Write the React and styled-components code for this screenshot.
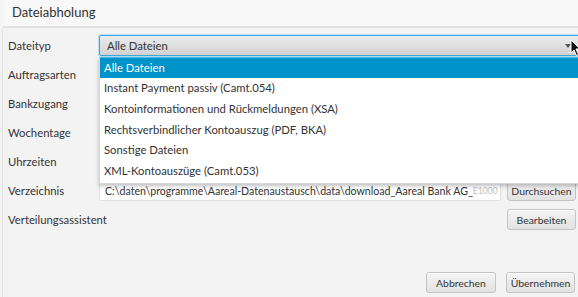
import React from "react";
import styled, { createGlobalStyle } from "styled-components";

const Global = createGlobalStyle`
  html, body { margin: 0; padding: 0; background: #f3f3f3; }
  body { font-family: Lato, "Open Sans", sans-serif; font-size: 11.3px; color: #333; }
  * { box-sizing: border-box; }
`;

const Page = styled.div`
  width: 578px;
  height: 297px;
  overflow: hidden;
  background: #f3f3f3;
  display: flex;
  flex-direction: column;
  position: relative;
`;

const Header = styled.div`
  height: 28px;
  background: #f8f8f8;
  border-bottom: 2px solid #e2e2e2;
  padding: 4px 0 0 9px;
  margin-left: 3px;
  font-size: 13px;
  color: #333;
`;

const Body = styled.div`
  flex: 1;
  display: flex;
  flex-direction: column;
  border-left: 1px solid #e4e4e4;
  margin-left: 2px;
  padding: 3px 3px 4px 5px;
`;

const Form = styled.div`
  display: grid;
  grid-template-columns: 91px 402px 6px 69px;
  grid-auto-rows: 29px;
  align-items: center;
`;

const Label = styled.div`
  grid-column: 1;
  white-space: nowrap;
`;

const ControlCell = styled.div`
  grid-column: ${(p) => (p.$span ? "2 / 5" : "2")};
  min-width: 0;
  position: relative;
  margin-right: ${(p) => (p.$span ? "-6px" : "0")};
`;

const ButtonCell = styled.div`
  grid-column: 4;
`;

const Combo = styled.div`
  height: 21px;
  border: 1px solid #3aa9dd;
  border-radius: 2px;
  box-shadow: 0 0 0 1px #b9e0f2;
  background: linear-gradient(#ececec, #d2d2d2);
  display: flex;
  align-items: center;
  padding-left: 7px;
  position: relative;
`;

const Arrow = styled.span`
  position: absolute;
  right: 10px;
  top: 8px;
  width: 0;
  height: 0;
  border-left: 3px solid transparent;
  border-right: 3px solid transparent;
  border-top: 4px solid #555;
`;

const Cursor = styled.svg`
  position: absolute;
  right: 0;
  top: 4px;
  z-index: 6;
`;

const Popup = styled.div`
  position: absolute;
  left: 0;
  right: -12px;
  top: 22px;
  background: #fff;
  box-shadow: 0 2px 4px rgba(0, 0, 0, 0.25);
  border: 1px solid #d8d8d8;
  border-top: none;
  z-index: 5;
  padding-bottom: 2px;
`;

const Item = styled.div`
  height: 20.6px;
  display: flex;
  align-items: center;
  padding-left: 4px;
  background: ${(p) => (p.$selected ? "#0093c9" : "transparent")};
  color: ${(p) => (p.$selected ? "#fff" : "#333")};
  border-top: ${(p) => (p.$selected ? "1px solid #4db8e0" : "none")};
`;

const TextField = styled.div`
  height: 20px;
  background: #fff;
  border: 1px solid #e0e0e0;
  border-radius: 2px;
  display: flex;
  align-items: center;
  padding-left: 5px;
  font-size: 10.6px;
  white-space: nowrap;
  overflow: hidden;
`;

const Blur = styled.span`
  color: #c4c4c4;
  font-size: 9px;
  letter-spacing: -0.3px;
`;

const Button = styled.button`
  font-family: inherit;
  font-size: 10.4px;
  color: #333;
  height: 21px;
  width: ${(p) => p.$w || 69}px;
  padding: 0;
  border: 1px solid #c4c4c4;
  border-radius: 3px;
  background: linear-gradient(#f4f4f4, #e2e2e2);
  box-shadow: inset 0 1px 0 #fff;
`;

const Footer = styled.div`
  margin-top: auto;
  display: flex;
  justify-content: flex-end;
  gap: 10px;
`;

const items = [
  "Alle Dateien",
  "Instant Payment passiv (Camt.054)",
  "Kontoinformationen und Rückmeldungen (XSA)",
  "Rechtsverbindlicher Kontoauszug (PDF, BKA)",
  "Sonstige Dateien",
  "XML-Kontoauszüge (Camt.053)",
];

export default function App() {
  return (
    <Page>
      <Global />
      <Header>Dateiabholung</Header>
      <Body>
        <Form>
          <Label>Dateityp</Label>
          <ControlCell $span>
            <Combo>
              Alle Dateien
              <Arrow />
            </Combo>
            <Cursor width="12" height="18" viewBox="0 0 12 18">
              <path d="M1 1 L1 14 L4 11 L6.5 16.5 L8.5 15.5 L6 10 L10 10 Z" fill="#111" stroke="#fff" strokeWidth="1" />
            </Cursor>
            <Popup>
              {items.map((t, i) => (
                <Item key={t} $selected={i === 0}>{t}</Item>
              ))}
            </Popup>
          </ControlCell>
          <Label>Auftragsarten</Label>
          <ControlCell />
          <Label>Bankzugang</Label>
          <ControlCell />
          <Label>Wochentage</Label>
          <ControlCell />
          <Label>Uhrzeiten</Label>
          <ControlCell />
          <Label>Verzeichnis</Label>
          <ControlCell>
            <TextField>
              C:\daten\programme\Aareal-Datenaustausch\data\download_Aareal Bank AG_<Blur>E1000</Blur>
            </TextField>
          </ControlCell>
          <ButtonCell>
            <Button>Durchsuchen</Button>
          </ButtonCell>
          <Label>Verteilungsassistent</Label>
          <ControlCell />
          <ButtonCell>
            <Button>Bearbeiten</Button>
          </ButtonCell>
        </Form>
        <Footer>
          <Button $w={70}>Abbrechen</Button>
          <Button $w={69}>Übernehmen</Button>
        </Footer>
      </Body>
    </Page>
  );
}
